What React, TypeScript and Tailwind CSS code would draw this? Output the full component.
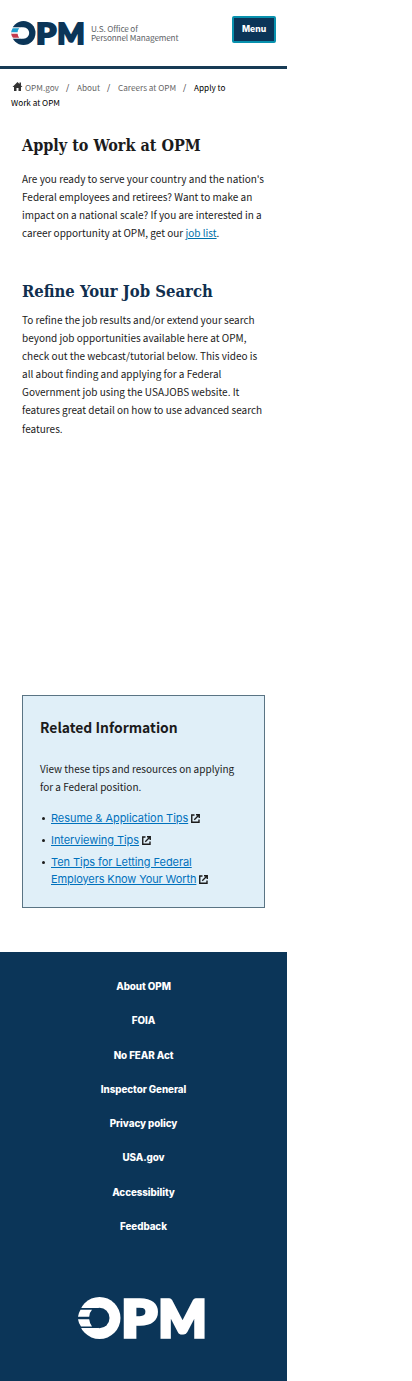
import React from "react";

const sans = "font-['Noto_Sans_CJK_JP',sans-serif]";
const inter = "font-['Inter',sans-serif]";
const serif = "font-['DejaVu_Serif_Condensed','DejaVu_Serif',serif] [font-stretch:condensed]";

function Logo({ className, stripe, accent, body, bg }: { className: string; stripe: string; accent: string; body: string; bg: string }) {
  return (
    <svg viewBox="0 0 127 42" className={className} aria-label="OPM">
      <circle cx="21.5" cy="21" r="21" fill={body} />
      <ellipse cx="21.5" cy="21" rx="10" ry="10.2" fill={bg} />
      <path d="M0 11H20V31H0Z" fill={bg} />
      <path d="M2.5 12.7H14Q11 16 11.2 19.7H0Q.5 16 2.5 12.7Z" fill={stripe} />
      <path d="M0 22.2H11.2Q11.5 26 14 29.5H3Q.5 26 0 22.2Z" fill={accent} />
      <g className="font-['Lato',sans-serif] text-[51px] font-black" fill={body} stroke={body} strokeWidth="3.6">
        <text x="43.5" y="39.5" textLength="35.5" lengthAdjust="spacingAndGlyphs">P</text>
        <text x="80.5" y="39.5" textLength="48" lengthAdjust="spacingAndGlyphs">M</text>
      </g>
    </svg>
  );
}

function External() {
  return (
    <svg viewBox="0 0 18 18" className="ml-[3px] inline-block h-[9px] w-[9px] align-[-1.5px]" fill="none" stroke="#1b1b1b" strokeWidth="2.8">
      <path d="M7 2H1.5V16.5H16V11" />
      <path d="M10 1.5H16.5V8M16.5 1.5L6.5 11.5" />
    </svg>
  );
}

const footerLinks = ["About OPM", "FOIA", "No FEAR Act", "Inspector General", "Privacy policy", "USA.gov", "Accessibility", "Feedback"];

export default function App() {
  return (
    <div className="h-[1381px] w-[412px] overflow-hidden bg-white">
      <div className={`flex h-[1381px] w-[287px] flex-col whitespace-nowrap text-[#1b1b1b] ${sans}`}>
        <header className="flex h-[69px] items-start border-b-[3px] border-[#173b55] pl-[11px] pr-[11px]">
          <Logo className="mt-[21px] h-6 w-[73px] overflow-visible" stripe="#1d9fd0" accent="#c43b4d" body="#0b3558" bg="#ffffff" />
          <div className="ml-[7px] mt-[24px] text-[8.2px] leading-[9px] tracking-[-0.14px] text-[#606367]">
            <div>U.S. Office of</div>
            <div>Personnel Management</div>
          </div>
          <button className={`ml-auto mt-[16px] h-[27px] w-[44px] rounded-[2px] border-2 border-[#0891ae] bg-[#0b3558] text-[8.6px] font-extrabold text-white ${inter}`}>Menu</button>
        </header>
        <nav className="h-[60px] pl-[11px] pt-[11px] text-[8.2px] leading-[15px] text-[#666]">
          <div className="flex">
            <svg viewBox="0 0 20 18" className="ml-[1px] mr-[2px] mt-[2px] h-[9px] w-[11px]" fill="#333">
              <path d="M10 0L14 4V1H17V7L20 10H17V18H12V12H8V18H3V10H0Z" />
            </svg>
            <span className="w-[41px]">OPM.gov</span>
            <span className="w-[11px] text-[#1b1b1b]">/</span>
            <span className="w-[30px]">About</span>
            <span className="w-[11px] text-[#1b1b1b]">/</span>
            <span className="w-[65px]">Careers at OPM</span>
            <span className="w-[11px] text-[#1b1b1b]">/</span>
            <span className="text-black">Apply to</span>
          </div>
          <div className="text-black">Work at OPM</div>
        </nav>
        <main className="h-[823px] px-[22px]">
          <h1 className={`mt-[5px] h-[24px] text-[16px] font-bold leading-6 ${serif}`}>Apply to Work at OPM</h1>
          <p className="mt-[12px] h-[72px] text-[10px] leading-[18px]">
            Are you ready to serve your country and the nation's<br />
            Federal employees and retirees? Want to make an<br />
            impact on a national scale? If you are interested in a<br />
            career opportunity at OPM, get our <a className="text-[#0071a9] underline">job list</a>.
          </p>
          <h2 className={`mt-[38px] h-[24px] text-[16.5px] font-bold leading-6 text-[#112f4e] ${serif}`}>Refine Your Job Search</h2>
          <p className="mt-[7px] text-[10px] leading-[18.1px]">
            To refine the job results and/or extend your search<br />
            beyond job opportunities available here at OPM,<br />
            check out the webcast/tutorial below. This video is<br />
            all about finding and applying for a Federal<br />
            Government job using the USAJOBS website. It<br />
            features great detail on how to use advanced search<br />
            features.
          </p>
          <section className="mt-[257px] h-[213px] w-[243px] border border-[#5a7484] bg-[#e0eff8] pl-[17px]">
            <h3 className="mt-[21px] h-[20px] text-[13.9px] font-bold leading-5">Related Information</h3>
            <p className="mt-[23px] text-[10px] leading-[18px]">View these tips and resources on applying<br />for a Federal position.</p>
            <ul className={`mt-[14px] pl-[11px] text-[11px] leading-[17px] tracking-[-0.06px] text-[#0071bc] ${inter}`}>
              {["Resume & Application Tips", "Interviewing Tips"].map((t) => (
                <li key={t} className="relative mb-[5px] h-[17px]">
                  <i className="absolute -left-[9px] top-[7px] h-[3px] w-[3px] rounded-full bg-[#1b1b1b]" />
                  <a className="underline">{t}</a><External />
                </li>
              ))}
              <li className="relative h-[34px]">
                <i className="absolute -left-[9px] top-[7px] h-[3px] w-[3px] rounded-full bg-[#1b1b1b]" />
                <a className="underline">Ten Tips for Letting Federal<br /><span className="tracking-[-0.11px]">Employers Know Your Worth</span></a><External />
              </li>
            </ul>
          </section>
        </main>
        <footer className={`flex flex-1 flex-col items-center bg-[#0b3558] pt-[18px] text-[9.8px] font-extrabold tracking-[-0.06px] text-white ${inter}`}>
          {footerLinks.map((t) => <a key={t} className="h-[34.3px] leading-[34px]">{t}</a>)}
          <Logo className="mt-[53px] h-[42px] w-[127px] -translate-x-[2px] overflow-visible" stripe="#ffffff" accent="#ffffff" body="#ffffff" bg="#0b3558" />
        </footer>
      </div>
    </div>
  );
}
